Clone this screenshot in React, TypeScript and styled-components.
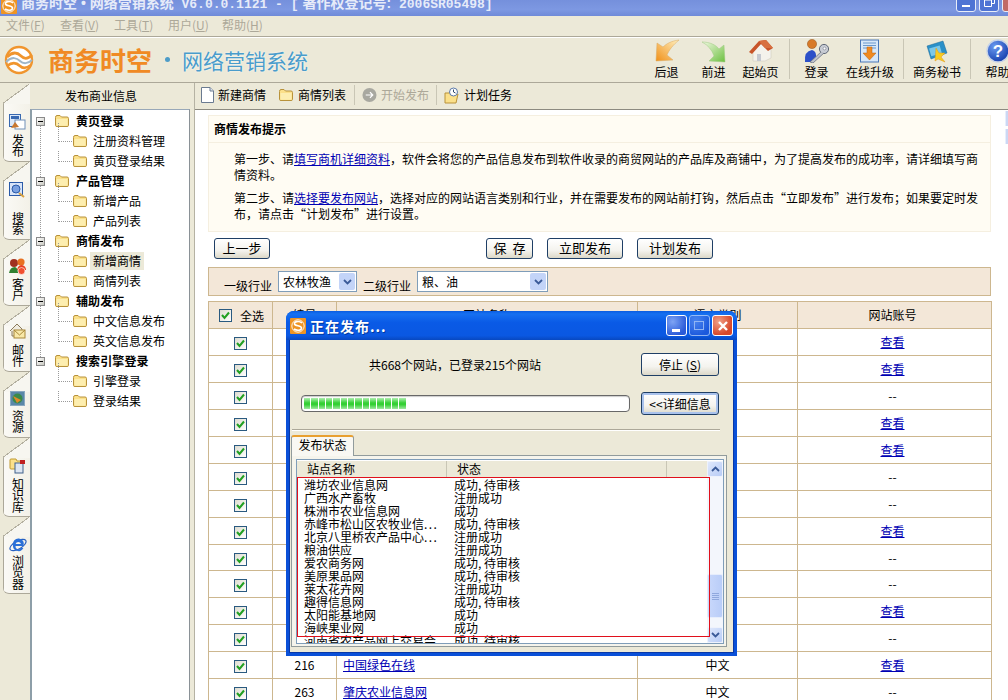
import React from "react";
import styled, { createGlobalStyle } from "styled-components";

const CJK = `"Noto Sans CJK SC", "Liberation Sans", sans-serif`;

const Global = createGlobalStyle`
  html, body { margin: 0; padding: 0; background: #ece9d8; overflow: hidden; }
  * { box-sizing: border-box; }
`;

const Page = styled.div`
  width: 1008px; height: 700px; overflow: hidden; position: relative;
  display: flex; flex-direction: column; background: #ece9d8;
  font: 12px/16px ${CJK}; color: #000;
`;

/* ---------- title + menu ---------- */
const TitleBar = styled.div`
  height: 16px; flex: none; display: flex; overflow: hidden;
  background: linear-gradient(#7590dc, #7d98e2 60%, #6f8ad8);
  padding-left: 1px;
  > svg { margin-top: -2px; flex: none; }
`;
const TitleText = styled.div`
  font: bold 13px/16px "Liberation Mono", ${CJK};
  color: #e6ebf9; white-space: pre; margin: -5px 0 0 4px; height: 20px;
  flex: 1;
`;
const TitleCjk = styled.span<{ $gap?: number }>`
  font-size: 14px; font-family: "Liberation Sans", ${CJK}; margin-left: ${(p) => p.$gap ?? 0}px;
`;
const TitleBtns = styled.div` display: flex; gap: 3px; margin-right: -14px; margin-top: -8px; `;
const TitleBtn = styled.div<{ $close?: boolean }>`
  width: 20px; height: 20px; border: 1px solid #e8edf8; border-radius: 3px;
  background: ${(p) => (p.$close ? "#c26a66" : "#4f74d4")};
  display: flex; align-items: flex-end; justify-content: center; padding-bottom: 4px;
`;
const MenuBar = styled.div`
  height: 20px; flex: none; display: flex; gap: 13px; padding: 0 0 0 6px;
  color: #aca899; line-height: 18px;
`;
const MenuItem = styled.span` width: 41px; white-space: nowrap; `;

/* ---------- header ---------- */
const Header = styled.div`
  height: 47px; flex: none; display: flex; overflow: hidden;
  border-top: 1px solid #aca899; border-bottom: 1px solid #aca899;
  box-shadow: inset 0 1px 0 #fff;
`;
const Brand = styled.div`
  width: 643px; flex: none; display: flex; align-items: center; padding-left: 4px;
`;
const BrandMain = styled.span`
  font: bold 26px/30px ${CJK}; color: #f08a24; margin-left: 14px; white-space: nowrap; width: 104px;
`;
const BrandDot = styled.span`
  width: 5px; height: 5px; border-radius: 50%; background: #4d9cc8; margin: 0 12px 0 13px;
`;
const BrandSub = styled.span`
  font: 21px/30px ${CJK}; color: #4a9ccb; white-space: nowrap; text-shadow: 0 0 2px #fff;
`;
const ToolGroup = styled.div` display: flex; flex: none; padding-top: 2px; `;
const ToolBtn = styled.div<{ $w: number }>`
  width: ${(p) => p.$w}px; flex: none; display: flex; flex-direction: column; align-items: center;
  white-space: nowrap; line-height: 15px;
  svg { display: block; margin-bottom: 1px; }
`;
const ToolSep = styled.div<{ $left?: number }>`
  width: 1px; height: 40px; background: #c9c6b5; margin: 0 3px 0 ${(p) => p.$left ?? 3}px; flex: none;
`;

/* ---------- body ---------- */
const Body = styled.div` flex: 1; display: flex; min-height: 0; `;

const TabCol = styled.div`
  width: 30px; flex: none; padding: 1px 0 0 3px; display: flex; flex-direction: column;
  position: relative;
`;
const SideTab = styled.div<{ $h: number; $gap: number }>`
  height: ${(p) => p.$h}px; flex: none; display: flex; flex-direction: column; align-items: center;
  justify-content: flex-end; gap: ${(p) => p.$gap}px; padding: 0 0 4px 2px;
  border-bottom: 1px solid #aca899; border-bottom-left-radius: 6px;
  background:
    linear-gradient(#aca899, #aca899) 0 20px / 1px 100% no-repeat,
    linear-gradient(to bottom right, #ece9d8 calc(50% - 1px), #b4b0a0 calc(50% - 1px), #b4b0a0 50%, #f7f6f0 50%) 0 0 / 100% 20px no-repeat,
    linear-gradient(90deg, #fbfaf6, #f3f1e8) 0 20px / 100% 100% no-repeat;
`;
const SideLabel = styled.span`
  writing-mode: vertical-rl; letter-spacing: -.5px; font-size: 12px; line-height: 14px;
`;

const TreeCol = styled.div` width: 160px; flex: none; display: flex; flex-direction: column; `;
const TreeHead = styled.div`
  height: 26px; flex: none; padding-top: 5px; padding-left: 35px; line-height: 16px; white-space: nowrap;
`;
const TreePanel = styled.div`
  flex: 1; background: #fff; padding-top: 1px; border-left: 2px solid #8d9ea8; border-top: 1px solid #98a8b8;
  border-right: 1px solid #8a9196;
`;
const Splitter = styled.div` width: 5px; flex: none; `;

const Group = styled.div<{ $last?: boolean }>`
  position: relative;
  &::before {
    content: ""; position: absolute; left: 8px; top: 12px;
    height: ${(p) => (p.$last ? "0" : "62px")};
    border-left: 1px dotted #9a9a9a;
  }
`;
const GroupRow = styled.div`
  height: 20px; display: flex; align-items: center; padding-left: 4px; position: relative; font-weight: 700;
`;
const Expander = styled.span`
  width: 9px; height: 9px; border: 1px solid #8a8a8a; flex: none; margin-right: 9px;
  background: linear-gradient(135deg, #fff, #c8c8c0); display: flex; align-items: center; justify-content: center;
  position: relative; z-index: 1;
  &::after { content: ""; width: 5px; height: 1px; background: #000; }
`;
const GroupLabel = styled.span` margin-left: 6px; white-space: nowrap; letter-spacing: .1px; `;
const ChildRow = styled.div<{ $last?: boolean }>`
  height: 20px; display: flex; align-items: center; padding-left: 40px; position: relative;
  &::before {
    content: ""; position: absolute; left: 26px; top: ${(p) => (p.$last ? "0" : "-8px")}; height: ${(p) => (p.$last ? "10px" : "18px")};
    width: 13px; border-left: 1px dotted #9a9a9a; border-bottom: 1px dotted #9a9a9a;
  }
`;
const ChildLabel = styled.span<{ $sel?: boolean }>`
  margin-left: 2px; padding: 1px 3px; white-space: nowrap;
  background: ${(p) => (p.$sel ? "#ece9d8" : "transparent")};
`;

/* ---------- main ---------- */
const Main = styled.div`
  flex: 1; min-width: 0; display: flex; flex-direction: column; border-left: 1px solid #b5b2a3;
  margin-left: -1px;
`;
const ActionBar = styled.div`
  height: 27px; flex: none; display: flex; align-items: center; padding: 0 0 2px 6px;
  border-bottom: 1px solid #8c8a80;
`;
const Action = styled.span<{ $off?: boolean; $w: number }>`
  display: flex; align-items: center; gap: 4px; width: ${(p) => p.$w}px; flex: none; white-space: nowrap;
  color: ${(p) => (p.$off ? "#aca899" : "#000")};
`;
const ActionSep = styled.span`
  width: 1px; height: 20px; background: #c9c6b5; margin: 0 7px; flex: none;
`;
const Content = styled.div`
  flex: 1; min-height: 0; background: #fff; padding: 5px 17px 0 13px; overflow: hidden; position: relative;
`;
const RailBtn = styled.div<{ $top: number }>`
  position: absolute; right: 0; top: ${(p) => p.$top}px; width: 3px; height: 15px;
  background: #ccd8f4; border-left: 1px solid #e8eefc;
`;
const Tip = styled.div`
  height: 117px; background: #fffcf3; border: 1px solid #f5efe0;
`;
const TipTitle = styled.div`
  height: 27px; padding-left: 5px; font-weight: 700; line-height: 25px; border-bottom: 1px solid #f5efe0;
`;
const TipBody = styled.div` padding: 8px 8px 0 25px; `;
const TipPara = styled.p` margin: 0 0 7px; line-height: 16px; `;
const A = styled.a` color: #0000b4; text-decoration: underline; `;

const ButtonRow = styled.div` display: flex; gap: 14px; padding: 6px 0 0 6px; height: 35px; `;
const XpButton = styled.div<{ $w: number; $focus?: boolean }>`
  width: ${(p) => p.$w}px; height: 23px; flex: none;
  border: 1px solid #1f3f66; border-radius: 3px; text-align: center; line-height: 21px; white-space: nowrap;
  background: linear-gradient(#fff, #f4f3ee 60%, #dcd8c8);
  box-shadow: ${(p) => (p.$focus ? "inset 0 0 0 2px #a9c2ec" : "none")};
`;
const PageButton = styled(XpButton)<{ $push?: number }>`
  height: 21px; line-height: 18px; font-size: 13px; margin-right: ${(p) => p.$push ?? 0}px;
`;
const FilterBar = styled.div`
  height: 29px; display: flex; align-items: center; padding-left: 15px;
  background: #f3e7d8; border: 1px solid #cdb78f;
`;
const FilterLabel = styled.span` white-space: nowrap; padding-top: 8px; `;
const SelectBox = styled.div<{ $w: number }>`
  width: ${(p) => p.$w}px; height: 21px; margin: 0 6px; background: #fff; border: 1px solid #7f9db9;
  display: flex; align-items: center; justify-content: space-between; padding: 0 1px 0 4px;
  line-height: 15px; white-space: nowrap;
`;
const SelectArrow = styled.span`
  width: 16px; height: 17px; background: #c3d4f8; border-radius: 2px; display: flex; align-items: center; justify-content: center;
`;
const Table = styled.table`
  width: 783px; margin-top: 5px; border-collapse: collapse; table-layout: fixed; border: 1px solid #cdb78f;
`;
const Th = styled.th`
  height: 27px; padding: 0; font-weight: 400; background: #f3e7d8; border: 1px solid #cdb78f; text-align: center;
`;
const Tr = styled.tr`
  &:nth-child(9) td { height: 26px; }
`;
const Td = styled.td`
  height: 27px; padding: 0; border: 1px solid #cdb78f; text-align: center; background: #fff;
`;
const NameTd = styled(Td)` text-align: left; padding-left: 6px; `;
const AccountTd = styled(Td)` padding-right: 4px; `;
const AccountTh = styled(Th)` padding-right: 4px; `;
const CheckWrap = styled.span`
  display: inline-flex; align-items: center; gap: 8px; white-space: nowrap; margin-left: 2px; vertical-align: middle;
`;
const Check = styled.span`
  width: 13px; height: 13px; display: inline-flex; align-items: center; justify-content: center; vertical-align: middle;
  border: 1px solid #2a5a80; background: linear-gradient(135deg, #dedcd0, #fff);
`;

/* ---------- dialog ---------- */
const Dialog = styled.div`
  position: absolute; left: 286px; top: 311px; width: 451px; height: 345px;
  background: #ece9d8; border: 3px solid #0a50d8; border-top: 0; border-radius: 8px 8px 0 0;
  display: flex; flex-direction: column; box-shadow: 0 0 0 1px #0838a8 inset;
`;
const DlgTitle = styled.div`
  height: 29px; margin: 0 -3px; flex: none; border-radius: 8px 8px 0 0; display: flex; align-items: center; padding: 0 4px;
  background: linear-gradient(#0a5ce0, #1670f0 10%, #0a5ae6 40%, #0a58e2 85%, #0848c0);
`;
const DlgCaption = styled.span`
  flex: 1; margin-left: 4px; color: #fff; font-weight: 700; font-size: 14px; letter-spacing: 1px; white-space: nowrap;
  text-shadow: 1px 1px 0 #003aa0;
`;
const DlgBtn = styled.span<{ $kind: "min" | "max" | "close" }>`
  width: 21px; height: 21px; border: 1px solid #fff; border-radius: 3px; margin-left: 2px; flex: none;
  display: flex; align-items: center; justify-content: center;
  opacity: ${(p) => (p.$kind === "max" ? 0.55 : 1)};
  background: ${(p) =>
    p.$kind === "close"
      ? "radial-gradient(circle at 30% 30%, #f0a088, #d8482a 70%)"
      : "radial-gradient(circle at 30% 30%, #7ea4f4, #2a5ad8 75%)"};
`;
const DlgBody = styled.div`
  flex: 1; min-height: 0; display: grid; grid-template-columns: 329px 78px; column-gap: 11px;
  grid-template-rows: 23px 23px; row-gap: 16px; padding: 13px 0 0 12px; align-items: center; align-content: start;
`;
const DlgInfo = styled.div` text-align: center; padding-right: 21px; white-space: nowrap; `;
const Progress = styled.div`
  height: 17px; border: 1px solid #686868; border-radius: 4px; background: #fff; padding: 2px 2px;
  display: flex; gap: 1px; box-shadow: inset 0 1px 1px #ccc;
`;
const ProgressBlock = styled.span`
  width: 6.35px; height: 100%; flex: none;
  background: linear-gradient(#b0eeb0, #35d035 45%, #35d035 60%, #a0e8a0);
`;
const DlgRule = styled.div`
  position: absolute; left: 3px; width: 428px; top: 118px; height: 2px; border-top: 1px solid #aca899; border-bottom: 1px solid #fff;
`;
const TabTag = styled.div`
  position: absolute; left: 2px; top: 124px; width: 63px; height: 21px; z-index: 1;
  background: #f9f8f3; border: 1px solid #919b9c; border-bottom: 0; border-top: 2px solid #e8a030; border-radius: 3px 3px 0 0;
  text-align: center; line-height: 16px;
`;
const TabPanel = styled.div`
  position: absolute; left: 2px; top: 144px; width: 436px; height: 192px; border: 1px solid #919b9c; background: #f5f4ec;
  padding: 3px 3px 3px 4px;
`;
const ListView = styled.div`
  width: 428px; height: 185px; border: 1px solid #7f9db9; background: #fff; position: relative; overflow: hidden;
  display: flex; flex-direction: column; padding-top: 1px;
`;
const ListHead = styled.div`
  height: 17px; flex: none; display: grid; grid-template-columns: 150px 220px 1fr; background: #ece9d8; border-bottom: 1px solid #d5d2c0;
  line-height: 16px;
`;
const ListHeadCell = styled.span` padding-left: 10px; border-right: 1px solid #c9c6b5; `;
const ListRow = styled.div`
  height: 13px; flex: none; display: grid; grid-template-columns: 150px 1fr; line-height: 13px; padding-left: 7px; white-space: nowrap;
`;
const Dots = styled.span` letter-spacing: 1.4px; `;
const RedMark = styled.div`
  position: absolute; left: 0; top: 17px; width: 413px; height: 160px; border: 1px solid #e0101c; pointer-events: none; z-index: 2;
`;
const VScroll = styled.div`
  position: absolute; right: 0; top: 1px; bottom: 0; width: 16px; background: #f3f6fc;
`;
const ScrollBtn = styled.div<{ $dn?: boolean }>`
  position: absolute; left: 0; width: 16px; height: 16px; ${(p) => (p.$dn ? "bottom: 0;" : "top: 0;")}
  background: linear-gradient(135deg, #dfe8fc, #b8ccf6); border: 1px solid #eef2fc; border-radius: 2px;
  display: flex; align-items: center; justify-content: center;
`;
const ScrollThumb = styled.div`
  position: absolute; left: 0; top: 113px; width: 16px; height: 44px; border-radius: 2px;
  background: linear-gradient(90deg, #c9d8fb, #b9cdf8); border: 1px solid #e6edfc;
  display: flex; flex-direction: column; align-items: center; justify-content: center; gap: 1px;
`;
const Grip = styled.i` width: 7px; height: 1px; background: #8fa8de; display: block; `;

/* ---------- icons ---------- */
const Folder = () => (
  <svg width="16" height="14" viewBox="0 0 16 14">
    <path d="M1.5 3.5 Q1.5 1.5 3 1.5 H6 L7.5 3 H13 Q14.5 3 14.5 4.5 V11.5 Q14.5 12.5 13 12.5 H3 Q1.5 12.5 1.5 11.5Z" fill="#fbe08a" stroke="#b8923a" />
    <path d="M2.5 5 H13.5 V11 Q13.5 11.8 12.5 11.8 H3.5 Q2.5 11.8 2.5 11Z" fill="#fdeeb0" />
  </svg>
);
const LogoMark = ({ s = 30 }: { s?: number }) => (
  <svg width={s} height={s} viewBox="0 0 30 30">
    <circle cx="15" cy="15" r="13" fill="#fff" stroke="#f0952e" strokeWidth="2.4" />
    <path d="M3 12 C9 6 14 8 17 11 C20 14 24 14 28 10" fill="none" stroke="#f0952e" strokeWidth="2.6" />
    <path d="M2 17 C8 11 13 13 16 16 C19 19 24 19 28 15" fill="none" stroke="#9fb6c8" strokeWidth="2" />
    <path d="M3 21 C9 16 13 18 16 21 C19 24 23 23 27 20" fill="none" stroke="#f0952e" strokeWidth="2.6" />
  </svg>
);
const SmallLogo = () => (
  <svg width="16" height="16" viewBox="0 0 16 16">
    <rect width="16" height="16" rx="1" fill="#ee9424" />
    <circle cx="8" cy="8" r="6.2" fill="none" stroke="#fff" strokeWidth=".9" />
    <path d="M12 5 C9 2.5 4 3.5 4.5 6 C5 8.5 11.5 7 11.5 10 C11.5 12.5 7 13 4 11" fill="none" stroke="#fff" strokeWidth="1.6" />
  </svg>
);
const Back = () => (
  <svg width="26" height="24" viewBox="0 0 26 24">
    <defs><linearGradient id="bk" x1="1" y1="0" x2="0" y2="1"><stop offset="0" stopColor="#fff0c0" /><stop offset="1" stopColor="#f09018" /></linearGradient></defs>
    <path d="M25 1 C17 2 12 5 9 8 L3 4 L2 22 L19 21 L13 16 C15 11 19 6 25 1Z" fill="url(#bk)" stroke="#d9a860" strokeWidth=".5" />
  </svg>
);
const Forward = () => (
  <svg width="26" height="24" viewBox="0 0 26 24">
    <defs><linearGradient id="fw" x1="0" y1="0" x2="1" y2="1"><stop offset="0" stopColor="#f0f8e0" /><stop offset="1" stopColor="#6cc040" /></linearGradient></defs>
    <path d="M1 3 C9 3 15 6 18 10 L23 6 L24 23 L8 22 L13 17 C11 11 7 6 1 3Z" fill="url(#fw)" stroke="#9cc880" strokeWidth=".5" />
  </svg>
);
const Home = () => (
  <svg width="26" height="24" viewBox="0 0 26 24">
    <path d="M5 11 V22 L17 22 L23 19 V10 L13 5Z" fill="#f4f2ec" stroke="#c8c4b8" strokeWidth=".5" />
    <path d="M1 13 L11 2 L18 1 L25 9 L20 12 L13 5 L4 15Z" fill="#c8552a" />
    <path d="M11 2 L18 1 L25 9 L17 9Z" fill="#d87040" />
    <rect x="9" y="15" width="4" height="7" fill="#c4c8d0" />
  </svg>
);
const Login = () => (
  <svg width="26" height="24" viewBox="0 0 26 24">
    <circle cx="8" cy="5" r="4.6" fill="#d87a28" stroke="#905018" strokeWidth=".5" />
    <path d="M1 23 Q0 12 8 11 Q13 12 12 20 L6 23Z" fill="#2c50c8" />
    <circle cx="20" cy="10" r="4.6" fill="#c8ccd4" stroke="#606878" />
    <path d="M17 13 L6 23 L9 24 L20 14" fill="#c0c4cc" stroke="#606878" strokeWidth=".7" />
    <circle cx="20.5" cy="9.5" r="1.4" fill="#fff" stroke="#606878" strokeWidth=".5" />
  </svg>
);
const Upgrade = () => (
  <svg width="22" height="24" viewBox="0 0 22 24">
    <rect x="1.5" y="1" width="18" height="22" fill="#d8e8f8" stroke="#4a78b8" />
    <path d="M4 4 H17 M4 6.5 H17 M4 9 H17" stroke="#6a98cc" />
    <path d="M8 8 H13 V14 H17 L10.5 21 L4 14 H8Z" fill="#f08a20" stroke="#b86010" strokeWidth=".5" />
  </svg>
);
const Secretary = () => (
  <svg width="24" height="24" viewBox="0 0 24 24">
    <path d="M2 7 L18 2 L22 14 L6 20Z" fill="#2a90c8" stroke="#1a6898" strokeWidth=".5" />
    <rect x="5" y="8" width="11" height="8" fill="#7cc8e8" transform="rotate(-16 10 12)" />
    <path d="M11 9 L14 14 L20 14 L16 18 L20 23 L13 20 L10 22 Z" fill="#f8cc20" stroke="#e09818" strokeWidth=".5" />
  </svg>
);
const Help = () => (
  <svg width="24" height="24" viewBox="0 0 24 24">
    <defs><radialGradient id="hp" cx=".35" cy=".3" r=".8"><stop offset="0" stopColor="#6a9af0" /><stop offset="1" stopColor="#1038a8" /></radialGradient></defs>
    <circle cx="12" cy="12" r="11" fill="url(#hp)" stroke="#c8d4e8" strokeWidth="1.4" />
    <text x="12" y="18" textAnchor="middle" fontSize="17" fontWeight="700" fill="#fff" fontFamily="Liberation Sans">?</text>
  </svg>
);
const DocIcon = () => (
  <svg width="13" height="16" viewBox="0 0 13 16">
    <path d="M.5 .5 H9 L12.5 4 V15.5 H.5Z" fill="#fff" stroke="#6a7a90" />
    <path d="M9 .5 V4 H12.5" fill="#dde4ee" stroke="#6a7a90" />
  </svg>
);
const GoIcon = () => (
  <svg width="16" height="16" viewBox="0 0 16 16">
    <circle cx="8" cy="8" r="7.5" fill="#a8a8a0" />
    <path d="M4 8 H11 M8.5 5 L11.5 8 L8.5 11" fill="none" stroke="#fff" strokeWidth="1.3" />
  </svg>
);
const PlanIcon = () => (
  <svg width="16" height="17" viewBox="0 0 16 17">
    <path d="M1 6 H6 L7 7 H14 L12 16 H1Z" fill="#fbe08a" stroke="#b8923a" />
    <circle cx="9.5" cy="5" r="4" fill="#fff" stroke="#5a78a8" />
    <path d="M9.5 2.5 V5 L11.5 6" fill="none" stroke="#30486c" />
  </svg>
);
const CheckMark = () => (
  <svg width="11" height="11" viewBox="0 0 11 11"><path d="M2 5 L4.5 8 L9 2.5" fill="none" stroke="#22a022" strokeWidth="2" /></svg>
);
const Chevron = ({ up }: { up?: boolean }) => (
  <svg width="9" height="6" viewBox="0 0 9 6"><path d={up ? "M1 5 L4.5 1.5 L8 5" : "M1 1 L4.5 4.5 L8 1"} fill="none" stroke="#3a5a98" strokeWidth="1.8" /></svg>
);
const TabPub = () => (
  <svg width="17" height="16" viewBox="0 0 17 16">
    <rect x=".5" y=".5" width="11" height="12" fill="#dbe8f8" stroke="#3868b0" /><rect x="2" y="2" width="8" height="3" fill="#3868b0" />
    <rect x="6" y="6" width="10" height="9" fill="#fff" stroke="#7090b8" /><path d="M2 14 L6 8 L10 13Z" fill="#c87830" />
  </svg>
);
const TabSearch = () => (
  <svg width="17" height="16" viewBox="0 0 17 16">
    <rect x=".5" y=".5" width="13" height="13" fill="#d8e4f8" stroke="#2a5aa8" />
    <circle cx="7" cy="7" r="4" fill="#7aa0e0" stroke="#2a5aa8" />
    <path d="M10 11 L15 15" stroke="#d8a040" strokeWidth="2" />
  </svg>
);
const TabClient = () => (
  <svg width="17" height="17" viewBox="0 0 17 17">
    <circle cx="5" cy="5" r="4" fill="#a03020" /><circle cx="12" cy="4" r="3.6" fill="#e87020" />
    <path d="M0 15 Q1 9 6 9 Q9 10 9 15Z" fill="#308030" /><path d="M8 12 Q9 7 13 7 Q17 8 17 12Z" fill="#e84020" />
    <circle cx="12.5" cy="13" r="3.5" fill="#f05030" stroke="#fff" strokeWidth=".6" />
  </svg>
);
const TabMail = () => (
  <svg width="17" height="16" viewBox="0 0 17 16">
    <path d="M1 8 L8 1 L13 6 V13 H3 V8" fill="#f0ece0" stroke="#8a7a5a" />
    <rect x="5" y="7" width="11" height="8" fill="#f8e8a8" stroke="#a8883a" /><path d="M5 7 L10.5 12 L16 7" fill="none" stroke="#a8883a" />
  </svg>
);
const TabRes = () => (
  <svg width="15" height="15" viewBox="0 0 15 15">
    <rect x=".5" y=".5" width="14" height="14" fill="#5a88a8" stroke="#8aa8c0" /><circle cx="7.5" cy="7.5" r="5" fill="#3a8a4a" />
    <path d="M3 5 L11 9 L7 12Z" fill="#e08a28" />
  </svg>
);
const TabKnow = () => (
  <svg width="17" height="16" viewBox="0 0 17 16">
    <path d="M1 2 Q1 1 2 1 H7 L8 3 H12 V11 H2 Q1 11 1 10Z" fill="#fbe08a" stroke="#c09a30" />
    <rect x="6" y="5" width="8" height="10" fill="#dde6f2" stroke="#40608a" /><rect x="11" y="2" width="5" height="4" fill="#c02020" />
  </svg>
);
const TabIE = () => (
  <svg width="18" height="18" viewBox="0 0 18 18">
    <ellipse cx="9" cy="9" rx="9" ry="4" fill="none" stroke="#2860c0" strokeWidth="1.2" transform="rotate(-30 9 9)" />
    <path d="M4 9 A5.5 5.5 0 1 1 14.5 10 H6.5 A3 3 0 0 0 12 12 H14.4 A5.5 5.5 0 0 1 4 9Z M6.6 8 H12 A2.8 2.8 0 0 0 6.6 8Z" fill="#2a70d8" fillRule="evenodd" />
  </svg>
);

/* ---------- data ---------- */
const menus: [string, string][] = [["文件", "F"], ["查看", "V"], ["工具", "T"], ["用户", "U"], ["帮助", "H"]];
const tabs = [
  { t: "发布", h: 78, g: 4, i: <TabPub /> },
  { t: "搜索", h: 78, g: 14, i: <TabSearch /> },
  { t: "客户", h: 66, g: 3, i: <TabClient /> },
  { t: "邮件", h: 66, g: 5, i: <TabMail /> },
  { t: "资源", h: 66, g: 4, i: <TabRes /> },
  { t: "知识库", h: 79, g: 4, i: <TabKnow /> },
  { t: "浏览器", h: 77, g: 1, i: <TabIE /> },
];
const tree = [
  { n: "黄页登录", c: ["注册资料管理", "黄页登录结果"] },
  { n: "产品管理", c: ["新增产品", "产品列表"] },
  { n: "商情发布", c: ["新增商情", "商情列表"] },
  { n: "辅助发布", c: ["中文信息发布", "英文信息发布"] },
  { n: "搜索引擎登录", c: ["引擎登录", "登录结果"] },
];
const accounts = ["查看", "查看", "--", "查看", "查看", "--", "--", "查看", "--", "--", "查看", "--", "查看", "--"];
const rows = accounts.map((a, i) => ({
  a,
  no: i === 12 ? "216" : i === 13 ? "263" : "",
  name: i === 12 ? "中国绿色在线" : i === 13 ? "肇庆农业信息网" : "",
}));
const sites: [string, string, boolean?][] = [
  ["潍坊农业信息网", "成功, 待审核"],
  ["广西水产畜牧", "注册成功"],
  ["株洲市农业信息网", "成功"],
  ["赤峰市松山区农牧业信", "成功, 待审核", true],
  ["北京八里桥农产品中心", "注册成功", true],
  ["粮油供应", "注册成功"],
  ["爱农商务网", "成功, 待审核"],
  ["美原果品网", "成功, 待审核"],
  ["莱太花卉网", "注册成功"],
  ["趣得信息网", "成功, 待审核"],
  ["太阳能基地网", "成功"],
  ["海峡果业网", "成功"],
  ["河南省农产品网上交易会", "成功, 待审核"],
];

export default function App() {
  return (
    <Page>
      <Global />
      <TitleBar>
        <SmallLogo />
        <TitleText><TitleCjk>商务时空 • 网络营销系统</TitleCjk> V6.0.0.1121 - [<TitleCjk $gap={4}>著作权登记号:</TitleCjk> 2006SR05498]</TitleText>
        <TitleBtns>
          <TitleBtn><svg width="8" height="2"><rect width="8" height="2" fill="#fff" /></svg></TitleBtn>
          <TitleBtn><svg width="11" height="10"><path d="M3.5 2.5 V.5 H10.5 V6.5 H8 M.5 3 H7.5 V9.5 H.5Z" fill="none" stroke="#fff" /></svg></TitleBtn>
          <TitleBtn $close />
        </TitleBtns>
      </TitleBar>
      <MenuBar>
        {menus.map(([m, k]) => (
          <MenuItem key={k}>{m}(<u>{k}</u>)</MenuItem>
        ))}
      </MenuBar>
      <Header>
        <Brand>
          <LogoMark />
          <BrandMain>商务时空</BrandMain>
          <BrandDot />
          <BrandSub>网络营销系统</BrandSub>
        </Brand>
        <ToolGroup>
          <ToolBtn $w={47}><Back />后退</ToolBtn>
          <ToolBtn $w={47}><Forward />前进</ToolBtn>
          <ToolBtn $w={47}><Home />起始页</ToolBtn>
          <ToolSep $left={5} />
          <ToolBtn $w={47}><Login />登录</ToolBtn>
          <ToolBtn $w={60}><Upgrade />在线升级</ToolBtn>
          <ToolSep />
          <ToolBtn $w={60}><Secretary />商务秘书</ToolBtn>
          <ToolSep />
          <ToolBtn $w={47}><Help />帮助</ToolBtn>
        </ToolGroup>
      </Header>
      <Body>
        <TabCol>
          {tabs.map((t) => (
            <SideTab key={t.t} $h={t.h} $gap={t.g}>
              {t.i}
              <SideLabel>{t.t}</SideLabel>
            </SideTab>
          ))}
        </TabCol>
        <TreeCol>
          <TreeHead>发布商业信息</TreeHead>
          <TreePanel>
            {tree.map((g, gi) => (
              <Group key={g.n} $last={gi === tree.length - 1}>
                <GroupRow>
                  <Expander />
                  <Folder />
                  <GroupLabel>{g.n}</GroupLabel>
                </GroupRow>
                {g.c.map((c, i) => (
                  <ChildRow key={c} $last={i === 1}>
                    <Folder />
                    <ChildLabel $sel={c === "新增商情"}>{c}</ChildLabel>
                  </ChildRow>
                ))}
              </Group>
            ))}
          </TreePanel>
        </TreeCol>
        <Splitter />
        <Main>
          <ActionBar>
            <Action $w={77}><DocIcon />新建商情</Action>
            <Action $w={69}><Folder />商情列表</Action>
            <ActionSep />
            <Action $off $w={67}><GoIcon />开始发布</Action>
            <ActionSep />
            <Action $w={80}><PlanIcon />计划任务</Action>
          </ActionBar>
          <Content>
            <RailBtn $top={1} />
            <RailBtn $top={19} />
            <Tip>
              <TipTitle>商情发布提示</TipTitle>
              <TipBody>
                <TipPara>第一步、请<A>填写商机详细资料</A>，软件会将您的产品信息发布到软件收录的商贸网站的产品库及商铺中，为了提高发布的成功率，请详细填写商情资料。</TipPara>
                <TipPara>第二步、请<A>选择要发布网站</A>，选择对应的网站语言类别和行业，并在需要发布的网站前打钩，然后点击“立即发布”进行发布；如果要定时发布，请点击“计划发布”进行设置。</TipPara>
              </TipBody>
            </Tip>
            <ButtonRow>
              <PageButton $w={56} $push={202}>上一步</PageButton>
              <PageButton $w={47}>保&nbsp;&nbsp;存</PageButton>
              <PageButton $w={76}>立即发布</PageButton>
              <PageButton $w={76}>计划发布</PageButton>
            </ButtonRow>
            <FilterBar>
              <FilterLabel>一级行业</FilterLabel>
              <SelectBox $w={79}>农林牧渔<SelectArrow><Chevron /></SelectArrow></SelectBox>
              <FilterLabel>二级行业</FilterLabel>
              <SelectBox $w={131}>粮、油<SelectArrow><Chevron /></SelectArrow></SelectBox>
            </FilterBar>
            <Table>
              <colgroup>
                <col width="64" /><col width="64" /><col width="301" /><col width="160" /><col width="194" />
              </colgroup>
              <thead>
                <tr>
                  <Th><CheckWrap><Check><CheckMark /></Check>全选</CheckWrap></Th>
                  <Th>编号</Th>
                  <Th>网站名称</Th>
                  <Th>语言类别</Th>
                  <AccountTh>网站账号</AccountTh>
                </tr>
              </thead>
              <tbody>
                {rows.map((r, i) => (
                  <Tr key={i}>
                    <Td><Check><CheckMark /></Check></Td>
                    <Td>{r.no}</Td>
                    <NameTd><A>{r.name}</A></NameTd>
                    <Td>{r.name && "中文"}</Td>
                    <AccountTd>{r.a === "--" ? "--" : <A>{r.a}</A>}</AccountTd>
                  </Tr>
                ))}
              </tbody>
            </Table>
          </Content>
        </Main>
      </Body>
      <Dialog>
        <DlgTitle>
          <SmallLogo />
          <DlgCaption>正在发布...</DlgCaption>
          <DlgBtn $kind="min"><svg width="9" height="12"><rect y="9" width="8" height="3" fill="#fff" /></svg></DlgBtn>
          <DlgBtn $kind="max"><svg width="11" height="11"><rect x=".5" y="1.5" width="9" height="8" fill="none" stroke="#fff" /></svg></DlgBtn>
          <DlgBtn $kind="close"><svg width="12" height="12"><path d="M2 2 L10 10 M10 2 L2 10" stroke="#fff" strokeWidth="2.4" /></svg></DlgBtn>
        </DlgTitle>
        <DlgBody>
          <DlgInfo>共668个网站，已登录215个网站</DlgInfo>
          <XpButton $w={78}>停止 (<u>S</u>)</XpButton>
          <Progress>
            {Array.from({ length: 14 }).map((_, i) => <ProgressBlock key={i} />)}
          </Progress>
          <XpButton $w={78} $focus>&lt;&lt;详细信息</XpButton>
          <DlgRule />
          <TabTag>发布状态</TabTag>
          <TabPanel>
            <ListView>
              <ListHead>
                <ListHeadCell>站点名称</ListHeadCell>
                <ListHeadCell>状态</ListHeadCell>
                <span />
              </ListHead>
              {sites.map(([n, s, more]) => (
                <ListRow key={n}><span>{n}{more && <Dots>...</Dots>}</span><span>{s}</span></ListRow>
              ))}
              <RedMark />
              <VScroll>
                <ScrollBtn><Chevron up /></ScrollBtn>
                <ScrollThumb><Grip /><Grip /><Grip /><Grip /></ScrollThumb>
                <ScrollBtn $dn><Chevron /></ScrollBtn>
              </VScroll>
            </ListView>
          </TabPanel>
        </DlgBody>
      </Dialog>
    </Page>
  );
}
